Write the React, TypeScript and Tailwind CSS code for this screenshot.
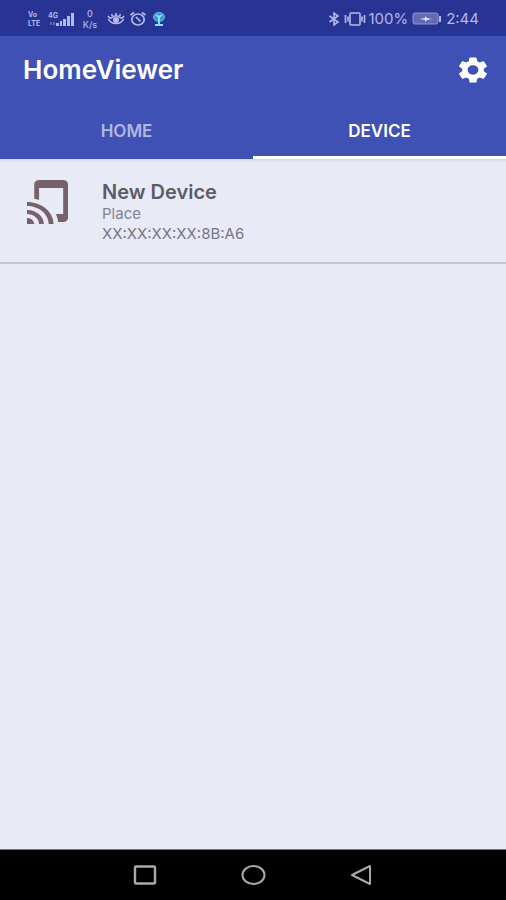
import React, { useState } from 'react';

interface Device {
  id: number;
  name: string;
  place: string;
  address: string;
}

type Tab = 'HOME' | 'DEVICE';

const TABS: Tab[] = ['HOME', 'DEVICE'];

const DEVICES: Device[] = [
  { id: 1, name: 'New Device', place: 'Place', address: 'XX:XX:XX:XX:8B:A6' },
];

const StatusBar: React.FC = () => (
  <div className="flex h-9 shrink-0 items-center justify-between bg-[#283493] pl-7 pr-[27px] pt-0.5 text-[#b5b9e6]">
    <div className="flex items-center">
      <div className="w-4 text-[7px] font-bold leading-[9px]">
        <p>Vo</p>
        <p>LTE</p>
      </div>
      {/* Signal */}
      <div className="relative ml-1 h-4 w-7">
        <span className="absolute left-0 top-0 text-[7px] font-bold leading-[9px]">4G</span>
        <svg viewBox="0 0 28 16" className="h-4 w-7" fill="currentColor" aria-hidden="true">
          <path d="M2 11h2v3H2zM5 11h2v3H5z" opacity=".4" />
          <path d="M8 12h3v3H8zM12 10h2v5h-2zM15 8h3v7h-3zM19 5h3v10h-3zM23 2h3v13h-3z" />
        </svg>
      </div>
      <div className="ml-1 w-5 text-center text-[9px] font-medium leading-[11px]">
        <p>0</p>
        <p>K/s</p>
      </div>
      {/* Eye comfort */}
      <svg viewBox="0 0 18 16" className="ml-[7px] h-4 w-[18px]" fill="none" stroke="currentColor" strokeWidth="1.6" aria-hidden="true">
        <path d="M1.500 8C4 14 14 14 16.500 8M1 5q2 3 4 1.500Q9 3 13 6.500 15 8 17 5M9 4.500V2M5.500 5 4.500 3M12.500 5l1-2" />
        <circle cx="9" cy="9" r="2.2" fill="currentColor" />
      </svg>
      {/* Alarm */}
      <svg viewBox="0 0 18 16" className="ml-1 h-4 w-[18px]" fill="none" stroke="currentColor" strokeWidth="1.7" aria-hidden="true">
        <ellipse cx="9" cy="8.500" rx="6.200" ry="5.500" />
        <path d="M1.500 4 5 1.500M16.500 4 13 1.500M7 6l4.500 4.500" />
      </svg>
      {/* Fan */}
      <svg viewBox="0 0 16 16" className="ml-1 h-4 w-4" fill="none" aria-hidden="true">
        <ellipse cx="8" cy="6" rx="5.500" ry="4.500" fill="#4594cd" stroke="#65bde8" />
        <path d="M8 6 5 4M8 6l3-2M8 6v7M4 14h8" stroke="#7fe4fa" strokeWidth="2" />
      </svg>
    </div>
    <div className="flex items-center">
      <svg viewBox="0 0 12 16" className="h-4 w-3" fill="none" stroke="currentColor" strokeWidth="1.600" aria-hidden="true">
        <path d="M1.500 5 10 11 6 14V2l4 3-8.500 6" />
      </svg>
      {/* Vibrate */}
      <svg viewBox="0 0 22 16" className="ml-1 h-4 w-[22px]" fill="none" stroke="currentColor" strokeWidth="1.600" aria-hidden="true">
        <rect x="6" y="2" width="10" height="12" rx="1" />
        <path d="M1.500 4v8M4 5.500v5M18 5.500v5M20.500 4v8" />
      </svg>
      <span className="ml-0.5 text-[15px] leading-5">100%</span>
      <svg viewBox="0 0 30 14" className="ml-1 h-3.5 w-[30px]" aria-hidden="true">
        <rect x="1" y="1" width="25" height="11" rx="2" fill="#6369b5" stroke="#8f94cf" />
        <path d="M28 4v6" stroke="#b5b9e6" strokeWidth="2" />
        <path d="M8 7l5-1V4l2 2 5 1-5 1-2 2V8z" fill="#e0e2ff" />
      </svg>
      <span className="ml-1 text-[15px] leading-5">2:44</span>
    </div>
  </div>
);

const DeviceRow: React.FC<{ device: Device }> = ({ device }) => (
  <li className="flex items-start border-b-2 border-[#c3c5d2] pb-[18px] pl-[27px] pt-[21px]">
    <svg viewBox="2 1 17 22" preserveAspectRatio="none" className="h-11 w-[41px] shrink-0" fill="#75626b" aria-hidden="true">
      <path d="M2 16v2c2.760 0 5 2.240 5 5h2c0-3.870-3.130-7-7-7zm0 4v3h3c0-1.660-1.340-3-3-3zm0-8v2c4.970 0 9 4.030 9 9h2c0-6.080-4.920-11-11-11zM17 1.010L7 1c-1.100 0-2 .9-2 2v7.370c.69.16 1.360.37 2 .64V5h10v13h-3.030c.52 1.250.84 2.590.95 4H17c1.100 0 2-.9 2-2V3c0-1.100-.9-1.990-2-1.990z" />
    </svg>
    <div className="ml-[34px]">
      <h2 className="text-[20px] font-semibold leading-6 text-[#5c5b66]">{device.name}</h2>
      <p className="text-[15px] leading-5 text-[#82828e]">{device.place}</p>
      <p className="text-[15px] leading-5 text-[#777783]">{device.address}</p>
    </div>
  </li>
);

const App: React.FC = () => {
  const [activeTab, setActiveTab] = useState<Tab>('DEVICE');

  return (
    <div className="flex min-h-screen flex-col bg-[#e8eaf6] font-['Inter',sans-serif]">
      <StatusBar />
      <header className="bg-[#3f51b5] text-white">
        <div className="flex h-[68px] items-center justify-between pl-[23px] pr-[18px]">
          <h1 className="text-[26px] font-semibold leading-8">HomeViewer</h1>
          <button type="button" aria-label="Settings">
            <svg viewBox="2 2 20 20" preserveAspectRatio="none" className="h-[26px] w-[30px]" fill="currentColor" aria-hidden="true">
              <path d="M19.140 12.940c.04-.3.06-.61.06-.94 0-.32-.02-.64-.07-.94l2.030-1.580c.18-.14.23-.41.12-.61l-1.920-3.320c-.12-.22-.37-.29-.59-.22l-2.390.96c-.5-.38-1.030-.7-1.620-.94l-.36-2.540c-.04-.24-.24-.41-.48-.41h-3.840c-.24 0-.43.17-.47.41l-.36 2.540c-.59.24-1.130.57-1.620.94l-2.390-.96c-.22-.08-.47 0-.59.22L2.740 8.870c-.12.21-.08.47.12.61l2.030 1.580c-.05.3-.09.63-.09.94s.02.64.07.94l-2.030 1.580c-.18.14-.23.41-.12.61l1.920 3.320c.12.22.37.29.59.22l2.390-.96c.5.38 1.030.7 1.620.94l.36 2.540c.05.24.24.41.48.41h3.840c.24 0 .44-.17.47-.41l.36-2.540c.59-.24 1.130-.56 1.620-.94l2.390.96c.22.08.47 0 .59-.22l1.920-3.320c.12-.22.07-.47-.12-.61l-2.010-1.580zM12 15.600c-1.980 0-3.600-1.620-3.600-3.600s1.620-3.600 3.600-3.600 3.600 1.620 3.600 3.600-1.620 3.600-3.600 3.600z" />
            </svg>
          </button>
        </div>
        <nav className="grid grid-cols-2" role="tablist">
          {TABS.map((tab) => (
            <button
              key={tab}
              type="button"
              role="tab"
              aria-selected={tab === activeTab}
              onClick={() => setActiveTab(tab)}
              className={`h-[55px] border-b-[3px] pt-1 text-[17px] font-semibold ${
                tab === activeTab ? 'border-white text-white' : 'border-[#3f51b5] text-[#b2b8e2]'
              }`}
            >
              {tab}
            </button>
          ))}
        </nav>
      </header>
      <main className="flex-1">
        <div className="-mb-1 h-1 bg-linear-to-b from-[#d5d7e3] to-[#e8eaf6]" />
        <ul>
          {DEVICES.map((device) => (
            <DeviceRow key={device.id} device={device} />
          ))}
        </ul>
      </main>
      {/* System navigation */}
      <nav className="flex h-[51px] shrink-0 items-center justify-center gap-[78px] border-t border-[#777] bg-black text-[#aaa]">
        <button type="button" aria-label="Recent apps">
          <svg viewBox="0 0 30 24" className="h-6 w-[30px]" fill="none" stroke="currentColor" strokeWidth="2.400">
            <rect x="5" y="3.500" width="20" height="17" rx="1" />
          </svg>
        </button>
        <button type="button" aria-label="Home">
          <svg viewBox="0 0 30 24" className="h-6 w-[30px]" fill="none" stroke="currentColor" strokeWidth="2">
            <ellipse cx="15.500" cy="12" rx="11" ry="9" />
          </svg>
        </button>
        <button type="button" aria-label="Back">
          <svg viewBox="0 0 30 24" className="h-6 w-[30px]" fill="none" stroke="currentColor" strokeWidth="2" strokeLinejoin="round">
            <path d="M24 3v18L6 12z" />
          </svg>
        </button>
      </nav>
    </div>
  );
};

export default App;
